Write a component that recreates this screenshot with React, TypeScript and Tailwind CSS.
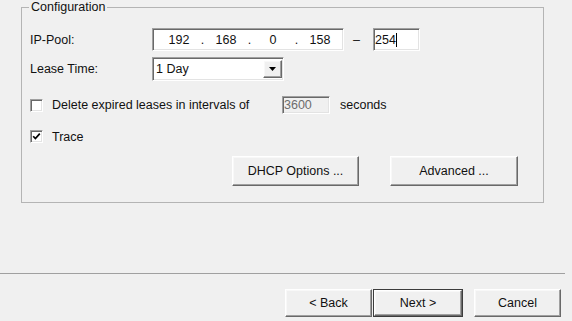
import React from "react";

const sunken =
  "border border-t-[#a0a0a0] border-l-[#a0a0a0] border-b-white border-r-white shadow-[inset_1px_1px_0_#696969,inset_-1px_-1px_0_#e3e3e3]";

const raised =
  "border border-t-white border-l-white border-b-[#696969] border-r-[#696969] shadow-[inset_-1px_-1px_0_#a0a0a0,inset_1px_1px_0_#f8f8f8] bg-[#f0f0f0]";

function Checkbox({ checked }: { checked?: boolean }) {
  return (
    <div className={`flex h-[13px] w-[13px] shrink-0 items-center justify-center bg-white ${sunken}`}>
      {checked && (
        <svg width="9" height="9" viewBox="0 0 9 9">
          <path d="M1.2 4.2 L3.4 6.6 L7.8 1.6" fill="none" stroke="#000" strokeWidth="1.7" />
        </svg>
      )}
    </div>
  );
}

function Button({ label, className, isDefault }: { label: string; className: string; isDefault?: boolean }) {
  if (isDefault) {
    return (
      <div className={`flex border border-[#3c3c3c] ${className}`}>
        <div className={`flex flex-1 items-center justify-center ${raised}`}>{label}</div>
      </div>
    );
  }
  return <div className={`flex items-center justify-center ${raised} ${className}`}>{label}</div>;
}

function IpSegment({ value }: { value: string }) {
  return <span className="w-[34px] text-center">{value}</span>;
}

function Dot() {
  return <span className="w-[13px] text-center">.</span>;
}

export default function App() {
  return (
    <div className="flex h-[321px] w-[572px] flex-col overflow-hidden bg-[#f0f0f0] font-['Liberation_Sans',Arial,sans-serif] text-[12.5px] leading-[14px] text-[#111]">
      <fieldset className="ml-[21px] h-[203px] w-[523px] border border-[#b4b4b4] pl-[7px]">
        <legend className="px-[2px]">Configuration</legend>

        <div className="mt-[14px] flex h-[23px] items-center">
          <span className="w-[123px] pl-[1px]">IP-Pool:</span>
          <div className={`flex h-[23px] w-[192px] items-center bg-white pl-[9px] ${sunken}`}>
            <IpSegment value="192" />
            <Dot />
            <IpSegment value="168" />
            <Dot />
            <IpSegment value="0" />
            <Dot />
            <IpSegment value="158" />
          </div>
          <span className="w-[29px] pl-[9px]">–</span>
          <div className={`flex h-[23px] w-[47px] items-center bg-white pl-[1px] ${sunken}`}>
            <span>254</span>
            <span className="h-[14px] w-px bg-black" />
          </div>
        </div>

        <div className="mt-[6px] flex h-[24px] items-center">
          <span className="w-[123px] pl-[1px]">Lease Time:</span>
          <div className={`flex h-[24px] w-[132px] items-center justify-between bg-white pl-[3px] pr-[1px] ${sunken}`}>
            <span>1 Day</span>
            <div className={`flex h-[18px] w-[19px] items-center justify-center ${raised}`}>
              <svg width="7" height="4" viewBox="0 0 7 4">
                <path d="M0 0 H7 L3.5 4 Z" fill="#000" />
              </svg>
            </div>
          </div>
        </div>

        <div className="mt-[15px] flex h-[18px] items-center">
          <div className="flex w-[253px] items-center gap-[9px] pl-[1px]">
            <Checkbox />
            <span>Delete expired leases in intervals of</span>
          </div>
          <div className={`flex h-[18px] w-[48px] items-center bg-[#f0f0f0] pl-[1px] text-[#6d6d6d] ${sunken}`}>
            3600
          </div>
          <span className="ml-[10px]">seconds</span>
        </div>

        <div className="mt-[16px] flex h-[13px] items-center gap-[9px] pl-[1px]">
          <Checkbox checked />
          <span>Trace</span>
        </div>

        <div className="mt-[13px] ml-[203px] flex h-[30px] gap-[31px]">
          <Button label="DHCP Options ..." className="w-[127px]" />
          <Button label="Advanced ..." className="w-[128px]" />
        </div>
      </fieldset>

      <div className="mt-[70px] h-px w-[565px] shrink-0 bg-[#a0a0a0]" />

      <div className="mt-[15px] ml-[285px] flex h-[28px]">
        <Button label="< Back" className="w-[87px]" />
        <Button label="Next >" className="ml-px w-[90px]" isDefault />
        <Button label="Cancel" className="ml-[11px] w-[87px]" />
      </div>
    </div>
  );
}
